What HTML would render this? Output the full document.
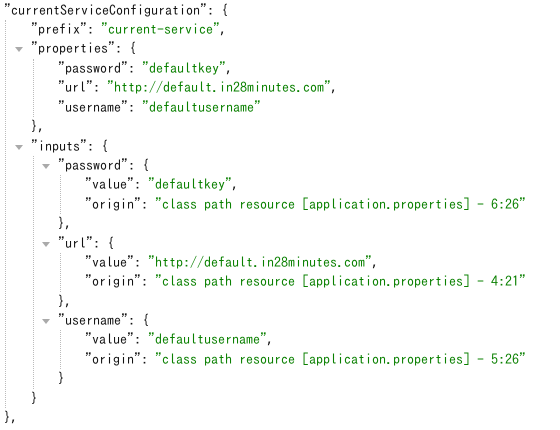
<!DOCTYPE html><html><head><style>
body{margin:0;width:560px;height:430px;background:#fff;overflow:hidden;position:relative;font-family:"IPAGothic",monospace;font-size:14px;color:#111}
.l{position:absolute;white-space:pre;line-height:19px;height:19px;font-family:"IPAGothic",monospace;font-size:14px}
.s{color:#0a8000}
.g{position:absolute;border-left:1px dotted #bbb;width:0}
.t{position:absolute;width:0;height:0;border-left:4px solid transparent;border-right:4px solid transparent;border-top:5px solid #aaa}
</style></head><body>
<div class="l" style="left:4px;top:1px">"currentServiceConfiguration": {</div>
<div class="l" style="left:31px;top:20px">"prefix": <span class="s">"current-service"</span>,</div>
<div class="l" style="left:31px;top:39px">"properties": {</div>
<div class="l" style="left:58px;top:59px">"password": <span class="s">"defaultkey"</span>,</div>
<div class="l" style="left:58px;top:78px">"url": <span class="s">"http://default.in28minutes.com"</span>,</div>
<div class="l" style="left:58px;top:98px">"username": <span class="s">"defaultusername"</span></div>
<div class="l" style="left:31px;top:117px">},</div>
<div class="l" style="left:31px;top:137px">"inputs": {</div>
<div class="l" style="left:58px;top:156px">"password": {</div>
<div class="l" style="left:85px;top:175px">"value": <span class="s">"defaultkey"</span>,</div>
<div class="l" style="left:85px;top:195px">"origin": <span class="s">"class path resource [application.properties] - 6:26"</span></div>
<div class="l" style="left:58px;top:214px">},</div>
<div class="l" style="left:58px;top:234px">"url": {</div>
<div class="l" style="left:85px;top:253px">"value": <span class="s">"http://default.in28minutes.com"</span>,</div>
<div class="l" style="left:85px;top:272px">"origin": <span class="s">"class path resource [application.properties] - 4:21"</span></div>
<div class="l" style="left:58px;top:292px">},</div>
<div class="l" style="left:58px;top:311px">"username": {</div>
<div class="l" style="left:85px;top:330px">"value": <span class="s">"defaultusername"</span>,</div>
<div class="l" style="left:85px;top:350px">"origin": <span class="s">"class path resource [application.properties] - 5:26"</span></div>
<div class="l" style="left:58px;top:369px">}</div>
<div class="l" style="left:31px;top:389px">}</div>
<div class="l" style="left:4px;top:408px">},</div>
<div class="g" style="left:5px;top:20px;height:388px"></div>
<div class="g" style="left:33px;top:59px;height:58px"></div>
<div class="g" style="left:33px;top:156px;height:233px"></div>
<div class="g" style="left:60px;top:175px;height:39px"></div>
<div class="g" style="left:60px;top:253px;height:39px"></div>
<div class="g" style="left:60px;top:330px;height:39px"></div>
<div class="t" style="left:15px;top:47px"></div>
<div class="t" style="left:15px;top:145px"></div>
<div class="t" style="left:42px;top:164px"></div>
<div class="t" style="left:42px;top:242px"></div>
<div class="t" style="left:42px;top:319px"></div>
</body></html>
